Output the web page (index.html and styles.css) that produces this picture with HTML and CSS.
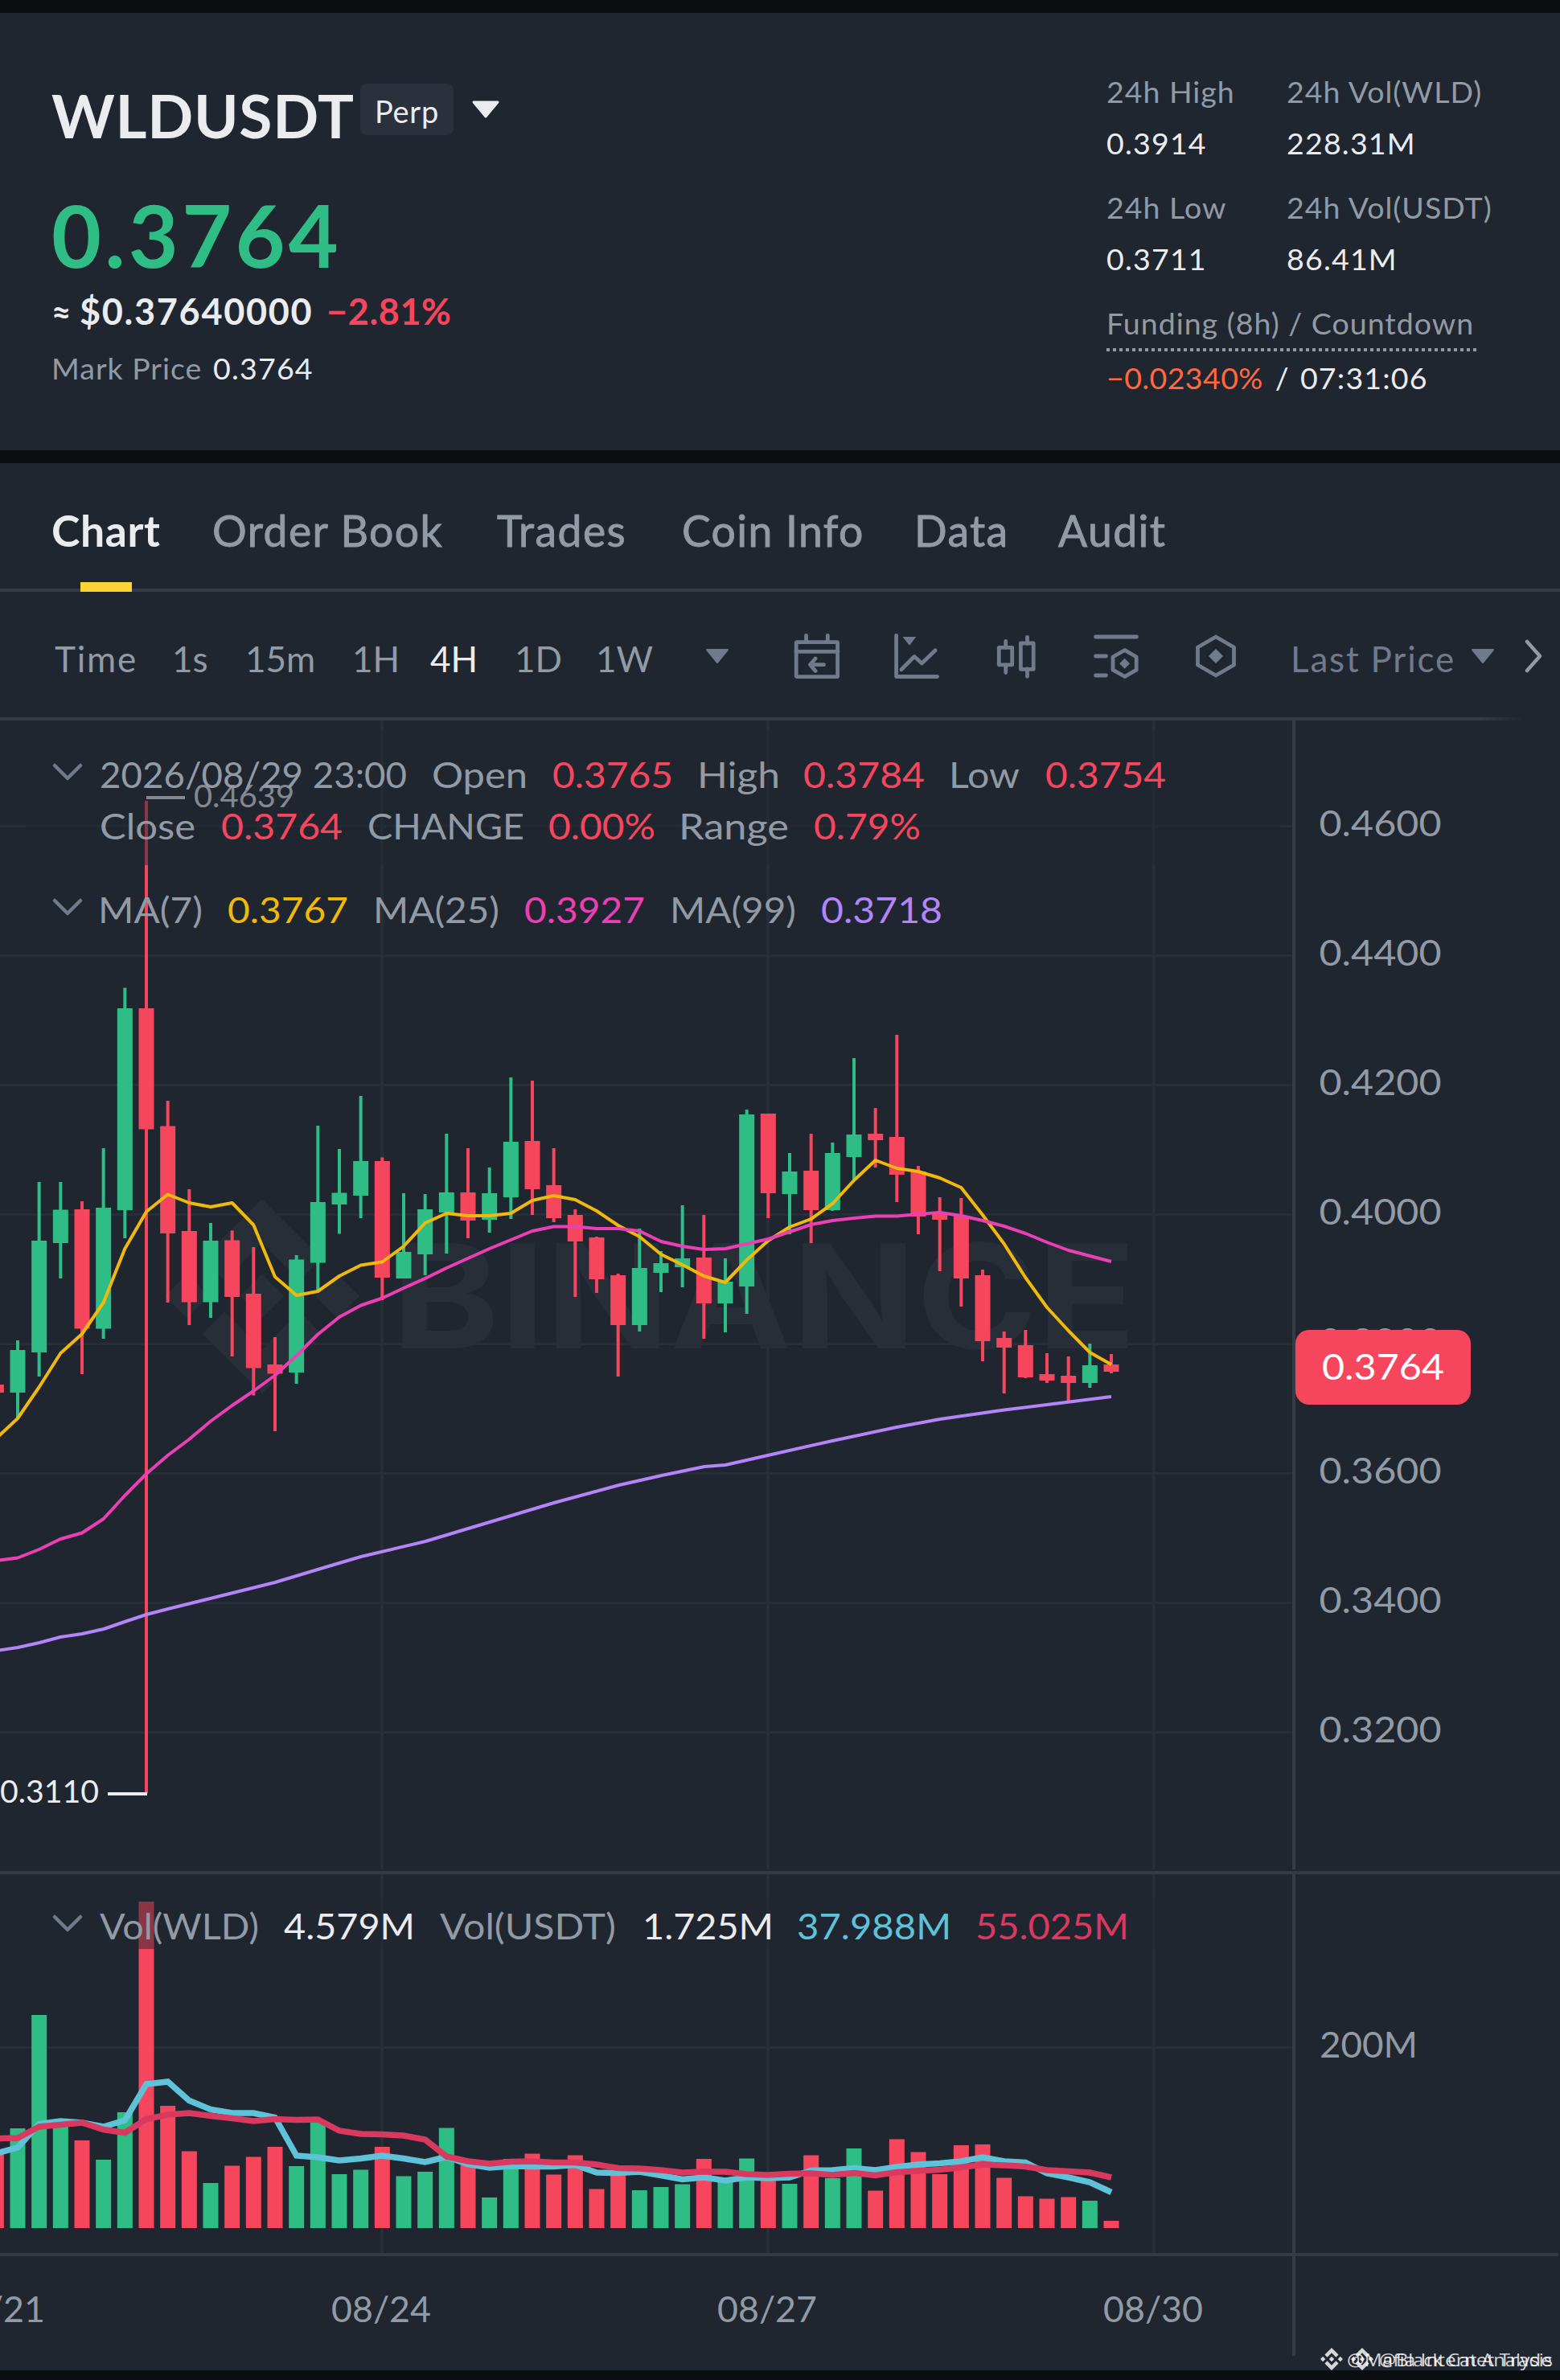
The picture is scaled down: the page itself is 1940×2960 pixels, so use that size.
FILE: index.html
```html
<!DOCTYPE html>
<html lang="en">
<head>
  <meta charset="UTF-8">
  <meta name="viewport" content="width=device-width, initial-scale=1.0">
  <title>WLDUSDT Perp</title>
  <link rel="stylesheet" href="styles.css">
</head>
<body>
  <header class="ticker">
    <div class="ticker-main">
      <div class="symbol-row">
        <h1 class="symbol">WLDUSDT</h1>
        <span class="badge">Perp</span>
        <svg class="symbol-caret" viewBox="0 0 36 24"><path d="M3 2h30L18 20z"/></svg>
      </div>
      <div class="last-price">0.3764</div>
      <div class="fiat-row"><span class="approx">≈</span><span class="fiat">$0.37640000</span><span class="change">−2.81%</span></div>
      <div class="mark-row"><span class="label mark-label">Mark Price</span><span class="num">0.3764</span></div>
    </div>

    <div class="ticker-stats">
      <div class="stat">
        <div class="label">24h High</div>
        <div class="num">0.3914</div>
      </div>
      <div class="stat">
        <div class="label">24h Vol(WLD)</div>
        <div class="num">228.31M</div>
      </div>
      <div class="stat">
        <div class="label">24h Low</div>
        <div class="num">0.3711</div>
      </div>
      <div class="stat">
        <div class="label">24h Vol(USDT)</div>
        <div class="num">86.41M</div>
      </div>
      <div class="stat funding">
        <div class="label funding-label">Funding (8h) / Countdown</div>
        <div class="num"><span class="funding-rate">−0.02340%</span><span class="slash">/</span>07:31:06</div>
      </div>
    </div>
  </header>

  <main class="market">
    <nav class="tabs">
      <a class="tab active">Chart</a>
      <a class="tab">Order Book</a>
      <a class="tab">Trades</a>
      <a class="tab">Coin Info</a>
      <a class="tab">Data</a>
      <a class="tab">Audit</a>
    </nav>

    <div class="toolbar">
      <span class="wide">Time</span>
      <span>1s</span>
      <span>15m</span>
      <span>1H</span>
      <span class="selected">4H</span>
      <span>1D</span>
      <span>1W</span>
      <svg class="caret" viewBox="0 0 30 20"><path d="M2 2h26L15 18z"/></svg>
      <svg class="icon" viewBox="0 0 60 60">
        <rect x="4.2" y="12.6" width="51.4" height="43.1" rx="1"/>
        <path d="M4 24.3h52M16.5 4.5v8M43.3 4.5v8M38.5 40.7H21.5M28 33l-6.5 7.7L28 48.4"/>
      </svg>
      <svg class="icon" viewBox="0 0 60 60">
        <path d="M4.6 4.5v51h51M10.9 46.7L27 30.5l9.4 8.5 16.8-16.3"/>
        <path class="solid" d="M12.5 6h16.8L21 16.7z"/>
      </svg>
      <svg class="icon" viewBox="0 0 60 60">
        <rect x="8.3" y="19.3" width="16.4" height="21.5"/>
        <rect x="35.4" y="14" width="15.8" height="32.4"/>
        <path d="M16.7 11.3v8M16.7 41v9.5M43.5 6.3v8M43.5 46v9.3"/>
      </svg>
      <svg class="icon" viewBox="0 0 60 60">
        <path d="M4.5 6h51M4.5 30h13M4.5 54h13M40.8 22.5L55.2 31v16.2l-14.4 8.3L26 47.2V31z"/>
        <path class="solid" d="M40.6 32.8l6.4 6.5-6.4 6.5-6.4-6.5z"/>
      </svg>
      <svg class="icon" viewBox="0 0 60 60">
        <path d="M30 6l22.5 13v22L30 54 7.5 41V19z"/>
        <path class="solid" d="M30 21l9 9-9 9-9-9z"/>
      </svg>
      <span class="price-type wide">Last Price</span>
      <svg class="caret" viewBox="0 0 30 20"><path d="M2 2h26L15 18z"/></svg>
      <svg class="more" viewBox="0 0 26 44"><path d="M4 4l16 18L4 40"/></svg>
    </div>

    <svg class="chart" id="chart" viewBox="0 896 1940 2052">
      <defs>
        <symbol id="logo" viewBox="0 0 24 24">
          <path d="M16.624 13.92l2.717 2.715-7.353 7.353-7.353-7.352 2.717-2.716 4.636 4.659zM21.261 9.284L24 12l-2.715 2.716L18.568 12zM11.989 9.285l2.716 2.691-2.716 2.717L9.272 12zM2.716 9.284L5.409 12l-2.691 2.692L0 12zM11.989.011l7.353 7.329-2.718 2.716-4.635-4.636L7.353 10.08 4.635 7.364z"/>
        </symbol>
      </defs>
      <g id="grid"></g>
      <g class="watermark">
        <use href="#logo" x="205" y="1491" width="242" height="242"/>
        <text x="487" y="1677" textLength="926" lengthAdjust="spacingAndGlyphs">BINANCE</text>
      </g>
      <g id="series"></g>
      <g id="labels"></g>
    </svg>
  </main>

  <footer class="bottom-bar"></footer>

  <script src="chart.js"></script>
</body>
</html>
```

FILE: styles.css
```css
* {
  box-sizing: border-box;
}
body {
  margin: 0;
  width: 1940px;
  height: 2960px;
  display: flex;
  flex-direction: column;
  overflow: hidden;
  background: #0b0e11;
  color: #eaecef;
  font-family: Lato, "Open Sans", sans-serif;
}

/* Ticker */
.ticker {
  height: 560px;
  border-top: 16px solid #0b0e11;
  padding: 75px 0 0 64px;
  display: flex;
  background: #202630;
}
.ticker-main {
  width: 1312px;
  padding-top: 7px;
}
.symbol-row {
  display: flex;
  height: 90px;
}
.symbol {
  margin: 0;
  width: 384px;
  font-size: 75px;
  line-height: 90px;
  font-weight: 700;
  letter-spacing: 0.7px;
}
.badge {
  width: 116px;
  height: 64px;
  margin-top: 6px;
  border-radius: 8px;
  background: #2b313c;
  text-align: center;
  font-size: 38px;
  line-height: 68px;
  letter-spacing: 0.7px;
}
.symbol-caret {
  width: 36px;
  height: 24px;
  margin: 27px 0 0 22px;
  fill: #eaecef;
  stroke: #eaecef;
  stroke-width: 3;
  stroke-linejoin: round;
}
.last-price {
  margin-top: 49px;
  font-size: 107px;
  line-height: 110px;
  font-weight: 700;
  letter-spacing: 4.2px;
  color: #2ebd85;
}
.fiat-row {
  display: flex;
  margin-top: 13px;
  font-size: 45px;
  line-height: 54px;
  font-weight: 700;
}
.approx {
  width: 35px;
  font-size: 42px;
}
.fiat {
  width: 307px;
  letter-spacing: 1.7px;
}
.change {
  letter-spacing: 0.6px;
  color: #f6465d;
}
.mark-row {
  display: flex;
  margin-top: 21px;
}
.mark-label {
  width: 201px;
}
.label,
.num {
  font-size: 37.5px;
  line-height: 46px;
}
.label {
  color: #929aa5;
  letter-spacing: 1px;
}
.num {
  letter-spacing: 1.2px;
}
.ticker-stats {
  display: grid;
  grid-template-columns: 224px auto;
  row-gap: 34px;
  align-content: start;
}
.stat .num {
  margin-top: 18px;
}
.funding {
  grid-column: 1 / 3;
}
.funding-label {
  width: 460px;
  height: 58px;
  background: repeating-linear-gradient(90deg, #929aa5 0 4px, transparent 4px 8px) 0 100% / 100% 4px no-repeat;
}
.funding .num {
  margin-top: 10px;
}
.funding-rate {
  letter-spacing: 0.4px;
  color: #ff693d;
}
.slash {
  margin: 0 13px 0 15px;
}

/* Market panel */
.market {
  height: 2388px;
  border-top: 16px solid #0b0e11;
  background: #202630;
}
.tabs {
  height: 160px;
  padding: 48px 0 0 64px;
  display: grid;
  grid-template-columns: 200px 354px 230px 289px 179px 140px;
  border-bottom: 4px solid #333b47;
  font-size: 53.5px;
  line-height: 70px;
  letter-spacing: 1.4px;
  color: #929aa5;
  -webkit-text-stroke: 0.9px #929aa5;
}
.tab {
  height: 112px;
}
.active {
  color: #eaecef;
  font-weight: 700;
  letter-spacing: 0.6px;
  -webkit-text-stroke: 0;
  background: linear-gradient(#fcd535, #fcd535) 36px 100% / 64px 12px no-repeat;
}
.toolbar {
  height: 160px;
  padding-left: 68px;
  display: grid;
  grid-template-columns: 146px 91px 133px 97px 105px 101px 136px 109px 124px 124px 124px 124px 123px 224px 66px 40px;
  background: linear-gradient(90deg, #333b47 1840px, transparent 1895px) 0 100% / 100% 4px no-repeat;
  font-size: 44px;
  line-height: 166px;
  color: #929aa5;
}
.wide {
  letter-spacing: 1.8px;
}
.selected {
  color: #eaecef;
}
.price-type {
  color: #707a8a;
}
.caret {
  width: 30px;
  height: 20px;
  margin-top: 70px;
  fill: #707a8a;
  stroke: #707a8a;
  stroke-width: 2;
  stroke-linejoin: round;
}
.icon {
  width: 60px;
  height: 60px;
  margin-top: 50px;
  fill: none;
  stroke: #707a8a;
  stroke-width: 4.8;
  stroke-linecap: round;
  stroke-linejoin: round;
}
.icon .solid {
  fill: #707a8a;
  stroke: none;
}
.more {
  width: 26px;
  height: 44px;
  margin-top: 58px;
  fill: none;
  stroke: #929aa5;
  stroke-width: 4.5;
  stroke-linecap: round;
  stroke-linejoin: round;
}

/* Chart */
.chart {
  display: block;
  width: 1940px;
  height: 2052px;
  font-size: 44.5px;
}
.watermark {
  fill: #282e38;
  font-family: Inter, sans-serif;
  font-size: 180px;
  font-weight: 700;
}
.grid-line {
  fill: #282e38;
}
.axis-line {
  fill: #333b47;
}
.up {
  fill: #2ebd85;
}
.down {
  fill: #f6465d;
}
.line {
  fill: none;
  stroke-width: 4;
  stroke-linejoin: round;
}
.vol-line {
  stroke-width: 7.5;
  stroke-linejoin: miter;
}
.ma7 {
  stroke: #f0b90b;
}
.ma25 {
  stroke: #eb40b5;
}
.ma99 {
  stroke: #b385f8;
}
.vol-ma5 {
  stroke: #5ec3d9;
}
.vol-ma10 {
  stroke: #d9395f;
}
.shade {
  fill: #202630;
  fill-opacity: 0.5;
}
.chevron {
  fill: none;
  stroke: #707a8a;
  stroke-width: 4.5;
  stroke-linecap: round;
  stroke-linejoin: round;
}
.grey {
  fill: #929aa5;
}
.white {
  fill: #eaecef;
}
.red {
  fill: #f6465d;
}
.yellow {
  fill: #f0b90b;
}
.pink {
  fill: #eb40b5;
}
.purple {
  fill: #b385f8;
}
.cyan {
  fill: #5ec3d9;
}
.crimson {
  fill: #d9395f;
}
.peak {
  font-size: 38px;
}
.tag-text {
  fill: #fff;
}
.credit {
  font-family: "Open Sans", sans-serif;
  font-size: 22px;
  fill: #fff;
  fill-opacity: 0.82;
}

.bottom-bar {
  height: 12px;
  background: #0b0e11;
}
```

FILE: chart.js
```js
const NS = 'http://www.w3.org/2000/svg';
const STEP = 26.667;
const FIRST_X = -4.67;
const VOL_BASE = 2771;

// [up/down, high, body top, body bottom, low, volume height]
const candles = [
  ['d', 1722, 1722, 1732, 1732, 93],
  ['u', 1667, 1679, 1732, 1764, 124],
  ['u', 1470, 1543, 1682, 1712, 265],
  ['u', 1470, 1504.5, 1546, 1590, 131],
  ['d', 1494, 1504, 1652.5, 1709, 109],
  ['u', 1428, 1502, 1652.5, 1665, 85],
  ['u', 1228.5, 1254, 1505, 1540, 144],
  ['d', 996, 1254, 1404.5, 2230, 406],
  ['d', 1369, 1400.5, 1534, 1620, 152],
  ['d', 1479, 1531, 1619.5, 1648, 95.5],
  ['u', 1521, 1543, 1619.5, 1639, 56],
  ['d', 1530.5, 1542.5, 1613, 1687, 77.5],
  ['d', 1551, 1609, 1701.5, 1735.5, 88.5],
  ['d', 1663, 1697, 1708.5, 1780, 101],
  ['u', 1561, 1566.5, 1707, 1721, 77],
  ['u', 1400, 1495, 1570.5, 1605, 131],
  ['u', 1429, 1483.5, 1498, 1534.5, 67],
  ['u', 1363, 1444, 1487, 1515, 72.5],
  ['d', 1439.5, 1444, 1589, 1617, 101],
  ['u', 1484, 1557, 1590, 1590, 64.5],
  ['u', 1485, 1504, 1560, 1586, 70],
  ['u', 1410, 1483, 1508, 1559, 124.5],
  ['d', 1428, 1483, 1518, 1540, 78],
  ['u', 1452, 1484, 1517, 1533, 38],
  ['u', 1340, 1420, 1489, 1516, 86],
  ['d', 1344, 1419, 1479, 1511, 92.5],
  ['d', 1428, 1474, 1515, 1520, 66.5],
  ['d', 1504, 1511, 1544, 1613, 90.5],
  ['d', 1538, 1539, 1591, 1608, 48.5],
  ['d', 1584, 1586, 1648, 1712, 66],
  ['u', 1528, 1577, 1648, 1656, 47],
  ['u', 1556, 1571, 1583, 1607, 51],
  ['u', 1499, 1565, 1576, 1601, 54.5],
  ['d', 1511, 1564, 1621, 1665, 86],
  ['u', 1565, 1594, 1621, 1657, 58],
  ['u', 1380, 1386, 1600, 1634, 86.5],
  ['d', 1385, 1385, 1484, 1515, 60],
  ['u', 1434, 1457, 1485, 1535, 55],
  ['d', 1410, 1456, 1505, 1546, 90.5],
  ['u', 1421, 1434, 1505, 1506, 62],
  ['u', 1316, 1411, 1439, 1468, 99],
  ['d', 1378, 1410, 1418, 1452, 46.5],
  ['d', 1287, 1414, 1461, 1495, 110.5],
  ['d', 1450, 1457, 1513, 1535, 94.5],
  ['d', 1489, 1509, 1517, 1581, 67],
  ['d', 1490, 1512, 1590, 1625, 103],
  ['d', 1579, 1586, 1668, 1693, 104],
  ['d', 1656, 1664, 1676, 1733, 62.5],
  ['d', 1654, 1673, 1713, 1714, 39.5],
  ['d', 1683, 1709, 1717, 1720, 36.5],
  ['d', 1687, 1711, 1720, 1743, 38.5],
  ['u', 1671, 1698, 1720, 1726, 34],
  ['d', 1684, 1697, 1706, 1708, 9]
];

const ma7 = [1789, 1764, 1725, 1683, 1659, 1620, 1553, 1507, 1485.5, 1496, 1501, 1496, 1523.5, 1588, 1611, 1606, 1587, 1573.5, 1569.5, 1550, 1521, 1509, 1512, 1512, 1509, 1493, 1487, 1492, 1506, 1524, 1538, 1560, 1573, 1587, 1595, 1567, 1543, 1526, 1516, 1497, 1468, 1443, 1453, 1457, 1465, 1477, 1511, 1547, 1589, 1626, 1655, 1682, 1697];
const ma25 = [1941, 1937.5, 1927, 1914, 1906.5, 1889, 1860, 1833, 1810, 1790, 1767.5, 1748, 1730, 1710.5, 1686, 1659.5, 1638, 1623.5, 1614.5, 1602, 1590, 1577, 1565, 1553, 1542, 1531, 1525.5, 1525.5, 1528, 1528, 1531, 1544, 1550, 1554, 1553, 1547, 1541, 1532, 1523, 1518, 1515, 1512.5, 1512.5, 1510, 1508, 1512, 1518, 1525, 1534, 1545, 1555, 1562, 1569];
const ma99 = '-5,2053 22,2049 49,2043 75,2036 102,2032 129,2026 155,2017 182,2008 209,2001 342,1968 395,1952 449,1936 529,1917 609,1893 689,1869 770,1847 823,1835 876,1824 902,1822 955,1810 1035,1792 1115,1775 1169,1765 1249,1753.5 1302,1747 1382,1737';
const volMa5 = [2678, 2671, 2641.5, 2638, 2640, 2645, 2637, 2592, 2589, 2612.5, 2623.5, 2628, 2628, 2633.5, 2681, 2683, 2687, 2684.5, 2681, 2684.5, 2689, 2682.5, 2691.5, 2696, 2694, 2694.5, 2694.5, 2692.5, 2702, 2702.5, 2701, 2705.5, 2710.5, 2708, 2712, 2708, 2709, 2708, 2699.5, 2699, 2696.5, 2699, 2695, 2692, 2690.5, 2688, 2683, 2688, 2689.5, 2703, 2708, 2714, 2726.5];
const volMa10 = [2659.5, 2659, 2645, 2642.5, 2640, 2648.5, 2652.5, 2635.5, 2630, 2628, 2631.5, 2634.5, 2638, 2635.5, 2636.5, 2636, 2650, 2654, 2654.5, 2656, 2661, 2682, 2688, 2691, 2688.5, 2688, 2689.5, 2689.5, 2692, 2696.5, 2697, 2699, 2702, 2701, 2701, 2704, 2705, 2703.5, 2703, 2705, 2702.5, 2705.5, 2701.5, 2700, 2698.5, 2695.5, 2692, 2693, 2694.5, 2699, 2700.5, 2702, 2708];

// [text, x, baseline, width, class]
const legend = [
  ['2026/08/29 23:00', 124, 980, 382, 'grey'],
  ['Open', 537, 980, 119, 'grey'],
  ['0.3765', 687, 980, 150, 'red'],
  ['High', 867, 980, 103, 'grey'],
  ['0.3784', 999, 980, 151, 'red'],
  ['Low', 1180, 980, 88, 'grey'],
  ['0.3754', 1300, 980, 150, 'red'],
  ['Close', 124, 1043.5, 119, 'grey'],
  ['0.3764', 275, 1043.5, 151, 'red'],
  ['CHANGE', 457, 1043.5, 195, 'grey'],
  ['0.00%', 682, 1043.5, 133, 'red'],
  ['Range', 844, 1043.5, 137, 'grey'],
  ['0.79%', 1012, 1043.5, 133, 'red'],
  ['MA(7)', 122, 1147.5, 130, 'grey'],
  ['0.3767', 283, 1147.5, 150, 'yellow'],
  ['MA(25)', 464, 1147.5, 157, 'grey'],
  ['0.3927', 652, 1147.5, 150, 'pink'],
  ['MA(99)', 833, 1147.5, 157, 'grey'],
  ['0.3718', 1021, 1147.5, 151, 'purple'],
  ['Vol(WLD)', 124, 2411.5, 198, 'grey'],
  ['4.579M', 353, 2411.5, 163, 'white'],
  ['Vol(USDT)', 547, 2411.5, 219, 'grey'],
  ['1.725M', 799, 2411.5, 163, 'white'],
  ['37.988M', 991, 2411.5, 192, 'cyan'],
  ['55.025M', 1213, 2411.5, 191, 'crimson']
];

function add(parent, tag, attrs, text) {
  const el = document.createElementNS(NS, tag);
  for (const key in attrs) {
    el.setAttribute(key, attrs[key]);
  }
  if (text) {
    el.textContent = text;
  }
  parent.appendChild(el);
  return el;
}

function rect(parent, x, y, width, height, cls) {
  return add(parent, 'rect', { x, y, width, height, class: cls });
}

function label(parent, text, x, y, width, cls) {
  add(parent, 'text', { x, y, textLength: width, lengthAdjust: 'spacingAndGlyphs', class: cls }, text);
}

function line(parent, values, cls) {
  const points = typeof values === 'string'
    ? values
    : values.map((v, i) => `${(FIRST_X + i * STEP).toFixed(1)},${v}`).join(' ');
  add(parent, 'polyline', { points, class: 'line ' + cls });
}

const grid = document.getElementById('grid');
const series = document.getElementById('series');
const labels = document.getElementById('labels');

// Grid and axes
const prices = ['0.4600', '0.4400', '0.4200', '0.4000', '0.3800', '0.3600', '0.3400', '0.3200'];
prices.forEach((price, i) => {
  const y = 1027.5 + i * 161;
  rect(grid, 0, y - 1.5, 1607, 3, 'grid-line');
  label(labels, price, 1640.5, y + 12.5, 152, 'grey');
});
rect(grid, 0, 2545, 1607, 3, 'grid-line');
label(labels, '200M', 1641, 2559, 122, 'grey');

[475, 955, 1434.7].forEach(x => {
  rect(grid, x - 2, 896, 4, 1429, 'grid-line');
  rect(grid, x - 2, 2331, 4, 471, 'grid-line');
});
rect(grid, 1607, 896, 4, 1429, 'axis-line');
rect(grid, 1607, 2331, 4, 599, 'axis-line');
rect(grid, 0, 2327, 1940, 4, 'axis-line');
rect(grid, 0, 2802, 1938, 4, 'axis-line');

['08/21', '08/24', '08/27', '08/30'].forEach((date, i) => {
  label(labels, date, -68 + i * 480, 2888, 124, 'grey');
});

// Candles and volume
candles.forEach(([dir, high, top, bottom, low, vol], i) => {
  const x = FIRST_X + i * STEP;
  const cls = dir === 'u' ? 'up' : 'down';
  rect(series, x - 2, high, 4, low - high, cls);
  rect(series, x - 9.5, top, 19, bottom - top, cls);
  rect(series, x - 9.5, VOL_BASE - vol, 19, vol, cls);
});
line(series, ma7, 'ma7');
line(series, ma25, 'ma25');
line(series, ma99, 'ma99');
line(series, volMa5, 'vol-line vol-ma5');
line(series, volMa10, 'vol-line vol-ma10');

// High and low markers
rect(series, 182, 990, 48, 4, 'white');
label(series, '0.4639', 241, 1003.5, 125, 'white peak');
rect(series, 134, 2229, 49, 4, 'white');
label(series, '0.3110', 0, 2242, 123, 'white peak');

// Legend
rect(series, 32, 908, 1560, 168, 'shade');
rect(series, 32, 2360, 1404, 64, 'shade');
[952, 1120, 2384].forEach(y => {
  add(labels, 'path', { d: `M68 ${y}l16 16 16-16`, class: 'chevron' });
});
legend.forEach(item => label(labels, ...item));

// Current price tag
add(labels, 'rect', { x: 1611, y: 1654, width: 218, height: 93, rx: 17, class: 'down' });
label(labels, '0.3764', 1644, 1716, 152, 'tag-text');

// Account credits
add(labels, 'use', { href: '#logo', x: 1642, y: 2920, width: 28, height: 28, class: 'credit' });
label(labels, '@Mafia Internet Trade', 1675, 2943, 255, 'credit');
add(labels, 'use', { href: '#logo', x: 1680, y: 2920, width: 28, height: 28, class: 'credit' });
label(labels, '@Black Cat Analysis', 1715, 2943, 216, 'credit');
```
